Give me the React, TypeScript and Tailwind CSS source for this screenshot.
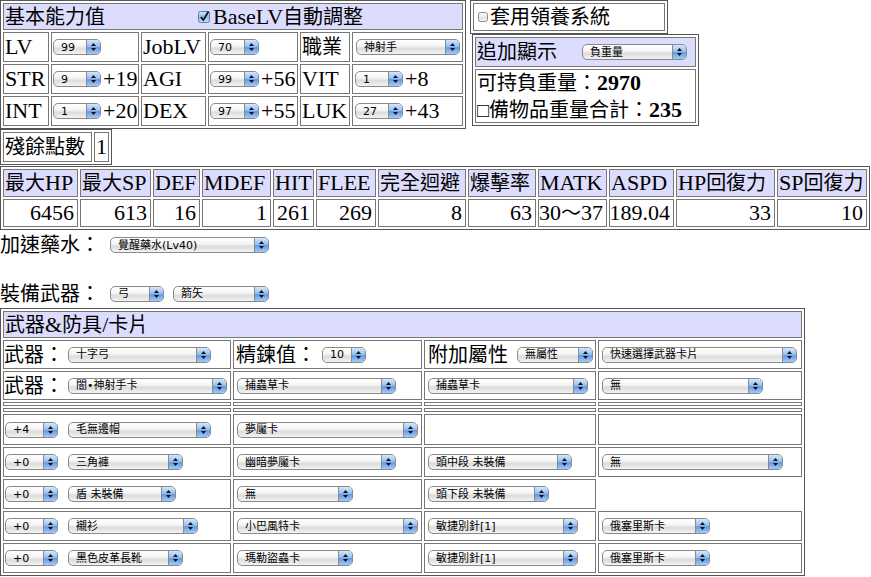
import React from "react";

// split text into latin / cjk runs so latin sits at 22px and cjk at 20px
function T({ s, bold }: { s: string; bold?: boolean }) {
  const parts = s.match(/[\x00-\x7f]+|[^\x00-\x7f]+/g) ?? [];
  return (
    <>
      {parts.map((p, i) => (
        <span
          key={i}
          className={
            (/^[\x00-\x7f]/.test(p) ? "text-[22px]" : "text-[20px]") +
            (bold ? " font-bold" : "")
          }
        >
          {p}
        </span>
      ))}
    </>
  );
}

function Select({ label, className }: { label: string; className: string }) {
  return (
    <div
      className={`flex h-[16px] shrink-0 overflow-hidden rounded-[5px] border border-[#8a8a8a] bg-[linear-gradient(to_bottom,#ffffff_0%,#f6f6f6_40%,#dcdcdc_62%,#f4f4f4_100%)] font-['DejaVu_Sans','Noto_Sans_CJK_TC',sans-serif] text-[11px] leading-none text-black ${className}`}
    >
      <span className="flex flex-1 items-center overflow-hidden whitespace-nowrap pl-[7px]">
        {label}
      </span>
      <span className="flex w-[14px] flex-col items-center justify-center gap-[2px] border-l border-[#8a8a8a] bg-[linear-gradient(to_bottom,#d4e6fb_0%,#97c0f1_45%,#619be7_55%,#a4cbf6_100%)]">
        <svg width="5" height="3" viewBox="0 0 5 3">
          <path d="M2.5 0 5 3H0z" fill="#111" />
        </svg>
        <svg width="5" height="3" viewBox="0 0 5 3">
          <path d="M0 0h5L2.5 3z" fill="#111" />
        </svg>
      </span>
    </div>
  );
}

function CheckOn() {
  return (
    <svg width="13" height="13" viewBox="0 0 13 13" className="shrink-0">
      <defs>
        <linearGradient id="cbOn" x1="0" y1="0" x2="0" y2="1">
          <stop offset="0" stopColor="#d8e9fb" />
          <stop offset="0.5" stopColor="#8ebbef" />
          <stop offset="1" stopColor="#c6e0f9" />
        </linearGradient>
      </defs>
      <rect x="0.5" y="1.5" width="11" height="11" rx="2" fill="url(#cbOn)" stroke="#5d7fa9" />
      <path d="M2.8 7 5.3 10 10.5 1.5" fill="none" stroke="#111" strokeWidth="1.8" />
    </svg>
  );
}

function CheckOff() {
  return (
    <svg width="10" height="10" viewBox="0 0 10 10" className="shrink-0">
      <defs>
        <linearGradient id="cbOff" x1="0" y1="0" x2="0" y2="1">
          <stop offset="0" stopColor="#ffffff" />
          <stop offset="0.6" stopColor="#e4e4e4" />
          <stop offset="1" stopColor="#f4f4f4" />
        </linearGradient>
      </defs>
      <rect x="0.5" y="0.5" width="9" height="9" rx="2" fill="url(#cbOff)" stroke="#8a8a8a" />
    </svg>
  );
}

const cell = "flex items-center border border-[#777] bg-white";
const head = "flex items-center border border-[#777] bg-[#dcdcfc]";

const stats = [
  ["最大HP", "6456"],
  ["最大SP", "613"],
  ["DEF", "16"],
  ["MDEF", "1"],
  ["HIT", "261"],
  ["FLEE", "269"],
  ["完全迴避", "8"],
  ["爆擊率", "63"],
  ["MATK", "30～37"],
  ["ASPD", "189.04"],
  ["HP回復力", "33"],
  ["SP回復力", "10"]
];

export default function App() {
  return (
    <div className="min-h-[577px] w-[871px] bg-white font-['Liberation_Serif','Noto_Sans_CJK_TC',serif] leading-none text-black">
      {/* Top area */}
      <div className="flex items-start">
        {/* 基本能力值 */}
        <div className="w-[466px] border border-[#555] p-[2px]">
          <div className="grid grid-cols-[46px_88px_65px_90px_50px_111px] grid-rows-[27px_30px_30px_30px] gap-[2px]">
            <div className={`${head} col-span-6 pl-[1px]`}>
              <T s="基本能力值" />
              <span className="ml-[93px] flex items-center">
                <CheckOn />
              </span>
              <span className="ml-[2px]">
                <T s="BaseLV自動調整" />
              </span>
            </div>

            <div className={`${cell} pl-[1px]`}><T s="LV" /></div>
            <div className={`${cell} pl-[1px]`}><Select label="99" className="w-[48px]" /></div>
            <div className={`${cell} pl-[1px]`}><T s="JobLV" /></div>
            <div className={`${cell} pl-[1px]`}><Select label="70" className="w-[49px]" /></div>
            <div className={`${cell} pl-[1px]`}><T s="職業" /></div>
            <div className={`${cell} pl-[3px]`}><Select label="神射手" className="w-[104px]" /></div>

            <div className={`${cell} pl-[1px]`}><T s="STR" /></div>
            <div className={`${cell} pl-[1px]`}>
              <Select label="9" className="w-[48px]" />
              <span className="ml-[2px]"><T s="+19" /></span>
            </div>
            <div className={`${cell} pl-[1px]`}><T s="AGI" /></div>
            <div className={`${cell} pl-[1px]`}>
              <Select label="99" className="w-[49px]" />
              <span className="ml-[2px]"><T s="+56" /></span>
            </div>
            <div className={`${cell} pl-[1px]`}><T s="VIT" /></div>
            <div className={`${cell} pl-[2px]`}>
              <Select label="1" className="w-[48px]" />
              <span className="ml-[2px]"><T s="+8" /></span>
            </div>

            <div className={`${cell} pl-[1px]`}><T s="INT" /></div>
            <div className={`${cell} pl-[1px]`}>
              <Select label="1" className="w-[48px]" />
              <span className="ml-[2px]"><T s="+20" /></span>
            </div>
            <div className={`${cell} pl-[1px]`}><T s="DEX" /></div>
            <div className={`${cell} pl-[1px]`}>
              <Select label="97" className="w-[49px]" />
              <span className="ml-[2px]"><T s="+55" /></span>
            </div>
            <div className={`${cell} pl-[1px]`}><T s="LUK" /></div>
            <div className={`${cell} pl-[2px]`}>
              <Select label="27" className="w-[48px]" />
              <span className="ml-[2px]"><T s="+43" /></span>
            </div>
          </div>
        </div>

        {/* Right column */}
        <div className="ml-[4px] flex flex-col">
          <div className="w-[198px] border border-[#555] p-[2px]">
            <div className={`${cell} h-[28px] pl-[4px]`}>
              <CheckOff />
              <span className="ml-[2px]"><T s="套用領養系統" /></span>
            </div>
          </div>
          <div className="ml-[2px] w-[227px] border border-[#555] p-[2px]">
            <div className={`${head} h-[30px] pl-[1px]`}>
              <T s="追加顯示" />
              <Select label="負重量" className="ml-[25px] w-[105px]" />
            </div>
            <div className="mt-[2px] flex h-[54px] flex-col justify-center gap-[5px] border border-[#777] pl-[1px]">
              <div>
                <T s="可持負重量：" />
                <T s="2970" bold />
              </div>
              <div>
                <T s="□備物品重量合計：" />
                <T s="235" bold />
              </div>
            </div>
          </div>
        </div>
      </div>

      {/* 殘餘點數 */}
      <div className="flex w-fit gap-[2px] border border-[#555] p-[2px]">
        <div className={`${cell} h-[30px] w-[89px] pl-[1px]`}><T s="殘餘點數" /></div>
        <div className={`${cell} h-[30px] w-[15px] pl-[1px]`}><T s="1" /></div>
      </div>

      {/* Stats */}
      <div className="mt-[1px] w-[870px] border border-[#555] p-[2px]">
        <div className="grid grid-cols-[75px_71px_47px_69px_41px_60px_88px_68px_69px_65px_99px_90px] grid-rows-[28px_28px] gap-[2px]">
          {stats.map(([h]) => (
            <div key={h} className={`${head} whitespace-nowrap pl-[1px]`}>
              <T s={h} />
            </div>
          ))}
          {stats.map(([h, v]) => (
            <div key={h + "v"} className={`${cell} justify-end whitespace-nowrap pr-[3px]`}>
              <T s={v} />
            </div>
          ))}
        </div>
      </div>

      {/* 加速藥水 / 裝備武器 */}
      <div className="flex h-[30px] items-center">
        <T s="加速藥水：" />
        <Select label="覺醒藥水(Lv40)" className="ml-[10px] w-[159px]" />
      </div>
      <div className="h-[19px]" />
      <div className="flex h-[29px] items-center">
        <T s="裝備武器：" />
        <Select label="弓" className="ml-[10px] w-[54px]" />
        <Select label="箭矢" className="ml-[9px] w-[96px]" />
      </div>

      {/* 武器&防具/卡片 */}
      <div className="w-[805px] border border-[#555] p-[2px]">
        <div className="grid grid-cols-[228px_189px_172px_204px] grid-rows-[27px_29px_29px_4px_4px_31px_30px_30px_30px_30px] gap-[2px]">
          <div className={`${head} col-span-4 pl-[1px]`}>
            <T s="武器&防具/卡片" />
          </div>

          <div className={cell}>
            <T s="武器：" />
            <Select label="十字弓" className="ml-[4px] w-[143px]" />
          </div>
          <div className={`${cell} pl-[2px]`}>
            <T s="精鍊值：" />
            <Select label="10" className="ml-[6px] w-[44px]" />
          </div>
          <div className={`${cell} pl-[3px]`}>
            <T s="附加屬性" />
            <Select label="無屬性" className="ml-[9px] w-[76px]" />
          </div>
          <div className={`${cell} pl-[3px]`}>
            <Select label="快速選擇武器卡片" className="w-[195px]" />
          </div>

          <div className={cell}>
            <T s="武器：" />
            <Select label="闇•神射手卡" className="ml-[4px] w-[159px]" />
          </div>
          <div className={`${cell} pl-[3px]`}><Select label="捕蟲草卡" className="w-[159px]" /></div>
          <div className={`${cell} pl-[3px]`}><Select label="捕蟲草卡" className="w-[160px]" /></div>
          <div className={`${cell} pl-[3px]`}><Select label="無" className="w-[161px]" /></div>

          <div className="border border-[#777]" />
          <div className="border border-[#777]" />
          <div className="border border-[#777]" />
          <div className="border border-[#777]" />
          <div className="border border-[#777]" />
          <div className="border border-[#777]" />
          <div className="border border-[#777]" />
          <div className="border border-[#777]" />

          <div className={`${cell} pl-[1px]`}>
            <Select label="+4" className="w-[53px]" />
            <Select label="毛無邊帽" className="ml-[10px] w-[143px]" />
          </div>
          <div className={`${cell} pl-[3px]`}><Select label="夢魘卡" className="w-[181px]" /></div>
          <div className={cell} />
          <div className={cell} />

          <div className={`${cell} pl-[1px]`}>
            <Select label="+0" className="w-[53px]" />
            <Select label="三角褲" className="ml-[10px] w-[115px]" />
          </div>
          <div className={`${cell} pl-[3px]`}><Select label="幽暗夢魘卡" className="w-[159px]" /></div>
          <div className={`${cell} pl-[3px]`}><Select label="頭中段 未裝備" className="w-[144px]" /></div>
          <div className={`${cell} pl-[3px]`}><Select label="無" className="w-[181px]" /></div>

          <div className={`${cell} pl-[1px]`}>
            <Select label="+0" className="w-[53px]" />
            <Select label="盾 未裝備" className="ml-[10px] w-[108px]" />
          </div>
          <div className={`${cell} pl-[3px]`}><Select label="無" className="w-[116px]" /></div>
          <div className={`${cell} pl-[3px]`}><Select label="頭下段 未裝備" className="w-[121px]" /></div>
          <div />

          <div className={`${cell} pl-[1px]`}>
            <Select label="+0" className="w-[53px]" />
            <Select label="襯衫" className="ml-[10px] w-[130px]" />
          </div>
          <div className={`${cell} pl-[3px]`}><Select label="小巴風特卡" className="w-[181px]" /></div>
          <div className={`${cell} pl-[3px]`}><Select label="敏捷別針[1]" className="w-[150px]" /></div>
          <div className={`${cell} pl-[3px]`}><Select label="俄塞里斯卡" className="w-[108px]" /></div>

          <div className={`${cell} pl-[1px]`}>
            <Select label="+0" className="w-[53px]" />
            <Select label="黑色皮革長靴" className="ml-[10px] w-[115px]" />
          </div>
          <div className={`${cell} pl-[3px]`}><Select label="瑪勒盜蟲卡" className="w-[116px]" /></div>
          <div className={`${cell} pl-[3px]`}><Select label="敏捷別針[1]" className="w-[150px]" /></div>
          <div className={`${cell} pl-[3px]`}><Select label="俄塞里斯卡" className="w-[108px]" /></div>
        </div>
      </div>
    </div>
  );
}
